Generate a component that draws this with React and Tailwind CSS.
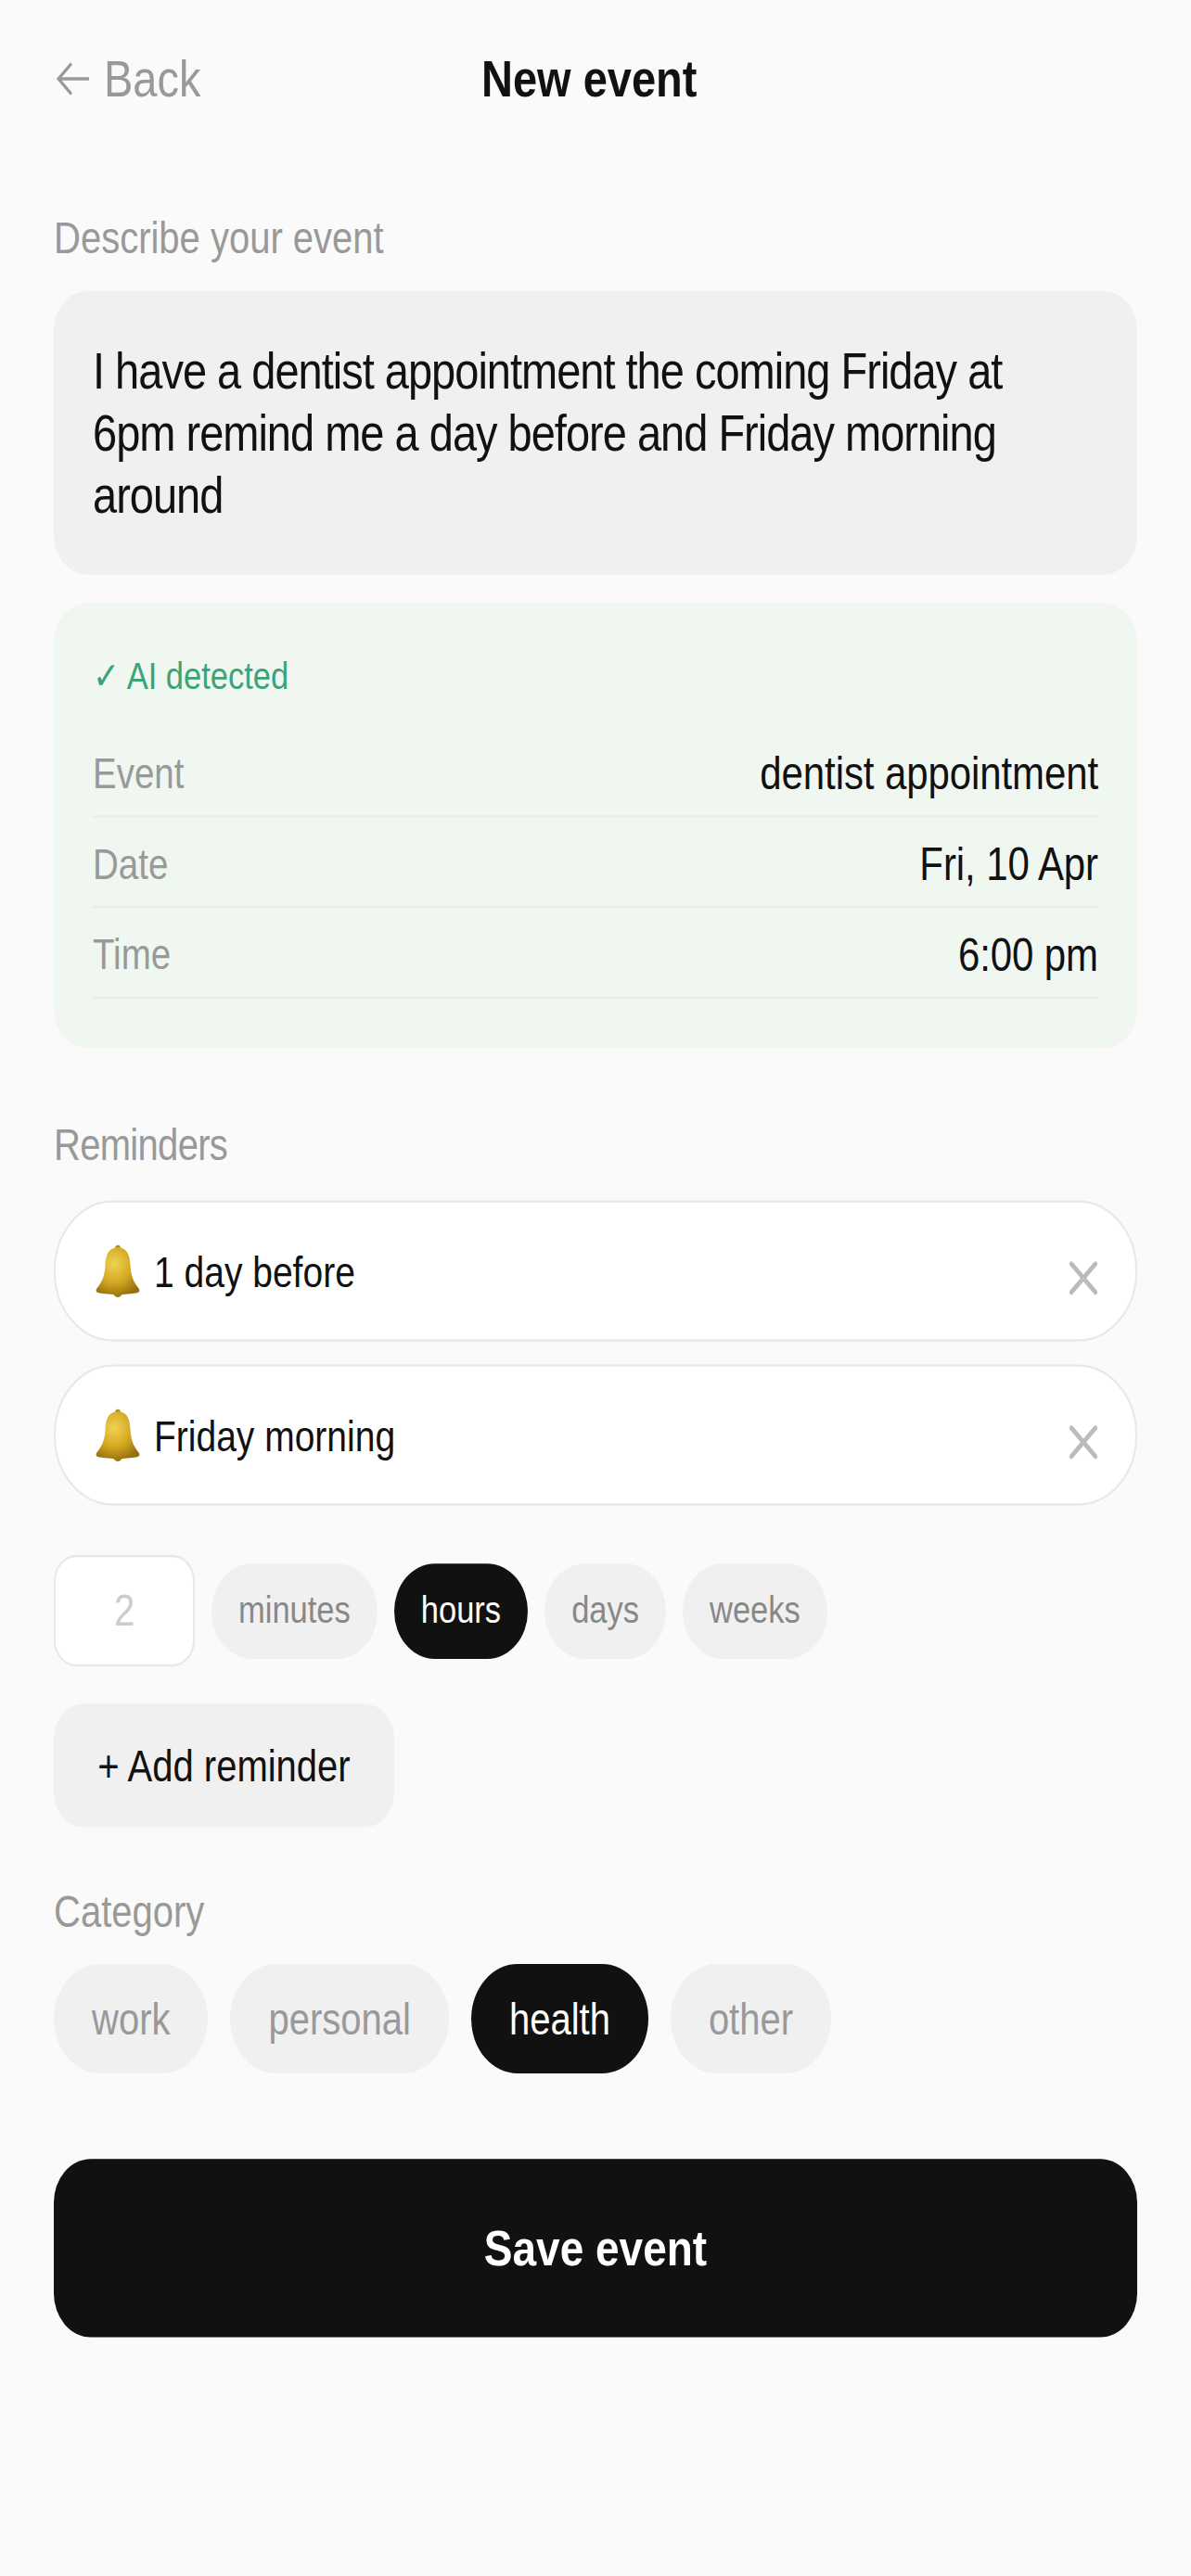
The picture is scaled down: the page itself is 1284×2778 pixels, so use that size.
import { X } from 'lucide-react';

const font = { fontFamily: '"Liberation Sans", Arial, sans-serif' };

function Bell() {
  return (
    <svg width="50" height="50" viewBox="0 0 50 50" className="shrink-0">
      <defs>
        <radialGradient id="bellBody" cx="42%" cy="35%" r="72%">
          <stop offset="0%" stopColor="#f0d352" />
          <stop offset="55%" stopColor="#d3a822" />
          <stop offset="100%" stopColor="#94700f" />
        </radialGradient>
      </defs>
      <circle cx="25" cy="4" r="3" fill="#b48c1c" />
      <circle cx="25" cy="43" r="5.5" fill="#a07a16" />
      <path
        d="M25 3C15 3 12 10 11.5 19C11 29 8 35 2 41C1 43 2 44 4 44.5C17 46.5 33 46.5 46 44.5C48 44 49 43 48 41C42 35 39 29 38.5 19C38 10 35 3 25 3Z"
        fill="url(#bellBody)"
      />
    </svg>
  );
}

function BackArrow() {
  return (
    <svg width="36" height="32" viewBox="0 0 36 32" fill="none" stroke="#999999" strokeWidth="3" className="ml-[2px] shrink-0">
      <path d="M3 16H36M17 2L3 16L17 30" />
    </svg>
  );
}

function Label({ children, className = '' }) {
  return (
    <div className={`h-[48px] flex items-center text-[40px] text-[#999999] ${className}`}>{children}</div>
  );
}

function DetectedRow({ label, value }) {
  return (
    <div className="h-[83px] flex items-center justify-between border-b-2 border-[#e8ede9] pt-1">
      <span className="text-[38.5px] text-[#999999]">{label}</span>
      <span className="text-[42px] tracking-[-0.1px] text-[#111111]">{value}</span>
    </div>
  );
}

function ReminderRow({ text }) {
  return (
    <div className="h-[129px] flex items-center rounded-[64px] border-2 border-[#e8e8e8] bg-white pl-[42px] pr-[30px]">
      <Bell />
      <span className="ml-[14px] mt-[3px] text-[39px] text-[#111111]">{text}</span>
      <X className="ml-auto mt-3 text-[#bbbbbb]" size={52} strokeWidth={2} />
    </div>
  );
}

export default function App() {
  const units = ['minutes', 'hours', 'days', 'weeks'];
  const categories = ['work', 'personal', 'health', 'other'];

  return (
    <div className="h-[2778px] overflow-hidden bg-[#fafafa]" style={font}>
      {/* reference is taller than wide by a constant factor, so the whole page is stretched */}
      <div className="h-[2354px] px-[58px] pt-[50px] origin-top scale-y-[1.18]">
        <div className="relative h-[44px] flex items-center">
          <BackArrow />
          <span className="ml-[16px] text-[47px] text-[#999999]">Back</span>
          <span className="absolute left-[461px] text-[47px] font-bold text-[#111111]">New event</span>
        </div>

        <Label className="mt-[99px]">Describe your event</Label>
        <div className="mt-[25px] h-[259px] rounded-[36px] bg-[#f0f0f0] pl-[42px] pr-[116px] py-[44px] text-[47px] tracking-[-1px] leading-[57.2px] text-[#111111]">
          I have a dentist appointment the coming Friday at 6pm remind me a day before and Friday morning around
        </div>

        <div className="mt-[26px] h-[407px] rounded-[36px] bg-[#f0f7f1] px-[42px] pt-[44px]">
          <div className="h-[48px] flex items-center text-[34.5px] text-[#3aa477]">✓ AI detected</div>
          <div className="mt-[21px]">
            <DetectedRow label="Event" value="dentist appointment" />
            <DetectedRow label="Date" value="Fri, 10 Apr" />
            <DetectedRow label="Time" value="6:00 pm" />
          </div>
        </div>

        <Label className="mt-[64px] tracking-[-0.7px]">Reminders</Label>
        <div className="mt-[27px] flex flex-col gap-[21px]">
          <ReminderRow text="1 day before" />
          <ReminderRow text="Friday morning" />
        </div>

        <div className="mt-[45px] flex items-center gap-[18px]">
          <div className="w-[152px] h-[102px] flex items-center justify-center rounded-[24px] border-2 border-[#e8e8e8] bg-white text-[40px] text-[#cccccc]">
            2
          </div>
          {units.map((u) => (
            <div
              key={u}
              className={
                u === 'hours'
                  ? 'h-[87px] flex items-center rounded-full bg-[#111111] px-[29px] text-[34.5px] text-white'
                  : 'h-[87px] flex items-center rounded-full bg-[#f0f0f0] px-[29px] text-[34.5px] text-[#888888]'
              }
            >
              {u}
            </div>
          ))}
        </div>

        <div className="mt-[34px] w-[367px] h-[113px] flex items-center justify-center rounded-[32px] bg-[#f0f0f0] text-[40px] text-[#111111]">
          + Add reminder
        </div>

        <Label className="mt-[53px]">Category</Label>
        <div className="mt-[24px] flex gap-[24px]">
          {categories.map((c) => (
            <div
              key={c}
              className={
                c === 'health'
                  ? 'h-[100px] flex items-center rounded-full bg-[#111111] px-[41px] text-[40px] text-white'
                  : 'h-[100px] flex items-center rounded-full bg-[#f0f0f0] px-[41px] text-[40px] text-[#999999]'
              }
            >
              {c}
            </div>
          ))}
        </div>

        <button className="mt-[78px] w-full h-[163px] rounded-[40px] bg-[#111111] text-[46px] font-bold text-white">
          Save event
        </button>
      </div>
    </div>
  );
}
